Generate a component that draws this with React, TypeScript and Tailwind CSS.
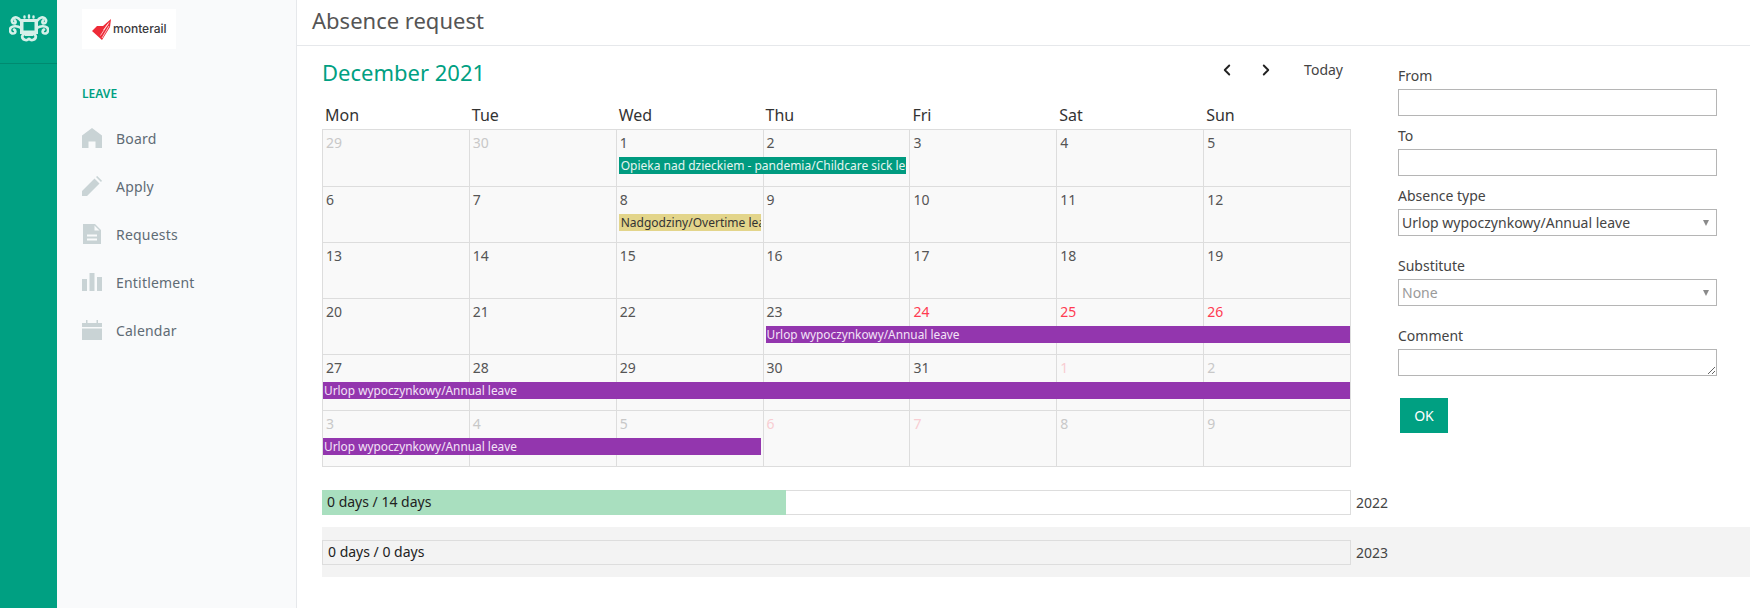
import { ChevronLeft, ChevronRight } from "lucide-react";

const FONT = "font-['Noto_Sans','Open_Sans',sans-serif]";

type Day = { n: number; tone?: "out" | "red" | "pink" };
type Leave = { label: string; place: string; color: string };
type Week = { days: Day[]; rowClass: string; leave?: Leave };

const d = (n: number): Day => ({ n });
const out = (n: number): Day => ({ n, tone: "out" });
const red = (n: number): Day => ({ n, tone: "red" });
const pink = (n: number): Day => ({ n, tone: "pink" });

const ANNUAL = "Urlop wypoczynkowy/Annual leave";

const WEEKS: Week[] = [
  {
    rowClass: "h-[57px]",
    days: [out(29), out(30), d(1), d(2), d(3), d(4), d(5)],
    leave: {
      label: "Opieka nad dzieckiem - pandemia/Childcare sick leave",
      place: "col-start-3 col-span-2 ml-[3px] mr-[3px] pl-[2px] text-[12px]",
      color: "bg-[#009b80] text-[#e6f5f1]",
    },
  },
  {
    rowClass: "h-[56px]",
    days: [d(6), d(7), d(8), d(9), d(10), d(11), d(12)],
    leave: {
      label: "Nadgodziny/Overtime leave",
      place: "col-start-3 col-span-1 ml-[3px] mr-[2px] pl-[2px] text-[12px]",
      color: "bg-[#e3d58b] text-[#333333]",
    },
  },
  { rowClass: "h-[56px]", days: [d(13), d(14), d(15), d(16), d(17), d(18), d(19)] },
  {
    rowClass: "h-[56px]",
    days: [d(20), d(21), d(22), d(23), red(24), red(25), red(26)],
    leave: {
      label: ANNUAL,
      place: "col-start-4 col-span-4 ml-[3px] pl-[1px] text-[11.85px]",
      color: "bg-[#9336ae] text-[#f3e3f7]",
    },
  },
  {
    rowClass: "h-[56px]",
    days: [d(27), d(28), d(29), d(30), d(31), pink(1), out(2)],
    leave: {
      label: ANNUAL,
      place: "col-start-1 col-span-7 ml-[1px] pl-[1px] text-[11.85px]",
      color: "bg-[#9336ae] text-[#f3e3f7]",
    },
  },
  {
    rowClass: "h-[56px]",
    days: [out(3), out(4), out(5), pink(6), pink(7), out(8), out(9)],
    leave: {
      label: ANNUAL,
      place: "col-start-1 col-span-3 ml-[1px] mr-[2px] pl-[1px] text-[11.85px]",
      color: "bg-[#9336ae] text-[#f3e3f7]",
    },
  },
];

const toneClass = {
  out: "text-[#c8c8c8]",
  red: "text-[#ff3b52]",
  pink: "text-[#f8cdd2]",
};

function RailLogo() {
  return (
    <svg width="40" height="28" viewBox="0 0 40 28" fill="none" stroke="#d5f0e9" strokeLinecap="round">
      <path
        fillRule="evenodd"
        stroke="none"
        fill="#d5f0e9"
        d="M11 5h18v15h-5v2h-8v-2h-5zM14.500 8v8.500h11V8z"
      />
      <path d="M12 7C9 3 6 2.500 4 4.500s-1 5 1 5 2-2 1-3" strokeWidth="2.600" />
      <path d="M28 7c3-4 6-4.500 8-2.500s1 5-1 5-2-2-1-3" strokeWidth="2.600" />
      <path d="M12 14c-3-2-8-2.500-10-.5s-1 6 2 6 3-3 1-4" strokeWidth="2.600" />
      <path d="M28 14c3-2 8-2.500 10-.5s1 6-2 6-3-3-1-4" strokeWidth="2.600" />
      <path d="M15.500 3.500V2.500M20 3.500V1.500M24.500 3.500V2.500" strokeWidth="2.400" />
      <path d="M16 20c-2 .5-3.500 2-2.500 4s4.500 3 6 1M24 20c2 .5 3.500 2 2.500 4s-4.500 3-6 1" strokeWidth="2.800" />
    </svg>
  );
}

function HomeIcon() {
  return (
    <svg width="20" height="20" viewBox="0 0 20 20" fill="#c9d3d5">
      <path d="M10 0l10 7.500V20h-6.500v-6.500h-7V20H0V7.500z" />
    </svg>
  );
}

function PencilIcon() {
  return (
    <svg width="20" height="20" viewBox="0 0 20 20" fill="#c9d3d5">
      <path d="M0 20v-5L12.500 2.500l5 5L5 20zM14 1l1.200-1L20 4.800 19 6z" />
    </svg>
  );
}

function DocIcon() {
  return (
    <svg width="20" height="20" viewBox="0 0 20 20" fill="#c9d3d5">
      <path
        fillRule="evenodd"
        d="M1 0h12l6 6v14H1zM12.500 1.500V6.500h5zM5 10.500v2h10v-2zM5 14.500v2h10v-2z"
      />
    </svg>
  );
}

function BarsIcon() {
  return (
    <svg width="20" height="20" viewBox="0 0 20 20" fill="#c9d3d5">
      <path d="M0 7h5v12H0zM7.500 1h5v18h-5zM15 5h5v14h-5z" />
    </svg>
  );
}

function CalendarIcon() {
  return (
    <svg width="20" height="20" viewBox="0 0 20 20" fill="#c9d3d5">
      <path d="M0 3h4V0h1.500v3h9V0H16v3h4v4H0zM0 8.500h20V20H0z" />
    </svg>
  );
}

const NAV = [
  { label: "Board", icon: <HomeIcon /> },
  { label: "Apply", icon: <PencilIcon /> },
  { label: "Requests", icon: <DocIcon /> },
  { label: "Entitlement", icon: <BarsIcon /> },
  { label: "Calendar", icon: <CalendarIcon /> },
];

function MonterailLogo() {
  return (
    <div className="flex h-[40px] w-[94px] items-center bg-white pl-[10px]">
      <svg width="19" height="21" viewBox="0 0 19 21" className="shrink-0">
        <path d="M0 12l5-5h6l8-7-1 8-8 13z" fill="#ee2b38" />
        <path d="M10 19l7-12M8.500 16.500L17 3.500M11.500 11L16 5" stroke="#fff" strokeWidth="0.700" />
      </svg>
      <span className="ml-[2px] font-['Inter',sans-serif] text-[12px] font-medium leading-none text-[#3a3a3e]">
        monterail
      </span>
    </div>
  );
}

function Sidebar() {
  return (
    <aside className="flex w-[240px] shrink-0 flex-col border-r border-[#e6e8eb] bg-[#f9fafb] pl-[25px]">
      <div className="pt-[9px]">
        <MonterailLogo />
      </div>
      <div className="mt-[36px] text-[12px] font-semibold leading-[18px] text-[#00a082]">LEAVE</div>
      <nav className="mt-[11px] flex flex-col">
        {NAV.map((item) => (
          <a
            key={item.label}
            className="flex h-[48px] items-center gap-[14px] text-[14px] tracking-[0.2px] text-[#5f6b75]"
          >
            {item.icon}
            {item.label}
          </a>
        ))}
      </nav>
    </aside>
  );
}

function Calendar() {
  return (
    <div className="w-[1029px] shrink-0">
      <div className="flex h-[54px] items-center justify-between">
        <h2 className="mb-[2px] text-[22px] leading-none text-[#00a082]">December 2021</h2>
        <div className="mb-[6px] flex items-center text-[#222222]">
          <ChevronLeft size={18} strokeWidth={2.5} />
          <ChevronRight size={18} strokeWidth={2.5} className="ml-[21px]" />
          <span className="mb-[2px] ml-[29px] mr-[8px] text-[14px] text-[#444444]">Today</span>
        </div>
      </div>
      <div className="grid h-[29px] grid-cols-7 items-center pr-px">
        {["Mon", "Tue", "Wed", "Thu", "Fri", "Sat", "Sun"].map((name) => (
          <div key={name} className="pl-[3px] text-[16px] text-[#333333]">
            {name}
          </div>
        ))}
      </div>
      <div className="border-b border-r border-[#dddddd]">
        {WEEKS.map((week, i) => (
          <div key={i} className={`grid grid-cols-7 ${week.rowClass}`}>
            {week.days.map((day, j) => (
              <div
                key={j}
                style={{ gridColumnStart: j + 1 }}
                className={`row-start-1 border-l border-t border-[#dddddd] bg-[#f9f9f9] pl-[3px] pt-[3px] text-[14px] leading-[20px] ${
                  day.tone ? toneClass[day.tone] : "text-[#555555]"
                }`}
              >
                {day.n}
              </div>
            ))}
            {week.leave && (
              <div
                className={`z-10 row-start-1 mt-[28px] h-[17px] self-start overflow-hidden whitespace-nowrap leading-[17px] ${week.leave.place} ${week.leave.color}`}
              >
                {week.leave.label}
              </div>
            )}
          </div>
        ))}
      </div>
    </div>
  );
}

function FieldLabel({ children }: { children: string }) {
  return <label className="block text-[14px] leading-[20px] text-[#444444]">{children}</label>;
}

const fieldClass = "block h-[27px] w-[319px] border border-[#b5b5b5] bg-white text-[14px] outline-none";

function SelectField({ value, muted }: { value: string; muted?: boolean }) {
  return (
    <div className="relative w-[319px]">
      <select
        defaultValue={value}
        className={`${fieldClass} appearance-none pl-[3px] ${muted ? "text-[#9a9a9a]" : "text-[#444444]"}`}
      >
        <option>{value}</option>
      </select>
      <span className="absolute right-[8px] top-[11px] h-0 w-0 border-x-[3px] border-t-[6px] border-x-transparent border-t-[#8a8a8a]" />
    </div>
  );
}

function RequestForm() {
  return (
    <form className="ml-[47px] w-[319px] pt-[20px]">
      <FieldLabel>From</FieldLabel>
      <input className={`${fieldClass} mt-[3px]`} />
      <div className="mt-[10px]">
        <FieldLabel>To</FieldLabel>
      </div>
      <input className={`${fieldClass} mt-[3px]`} />
      <div className="mt-[10px]">
        <FieldLabel>Absence type</FieldLabel>
      </div>
      <div className="mt-[3px]">
        <SelectField value="Urlop wypoczynkowy/Annual leave" />
      </div>
      <div className="mt-[20px]">
        <FieldLabel>Substitute</FieldLabel>
      </div>
      <div className="mt-[3px]">
        <SelectField value="None" muted />
      </div>
      <div className="mt-[20px]">
        <FieldLabel>Comment</FieldLabel>
      </div>
      <textarea className={`${fieldClass} mt-[3px]`} />
      <button
        type="button"
        className="ml-[2px] mt-[22px] h-[35px] w-[48px] bg-[#00a082] text-[14px] text-white"
      >
        OK
      </button>
    </form>
  );
}

function YearBar({ text, year, fill }: { text: string; year: string; fill?: boolean }) {
  return (
    <div className="flex items-center">
      <div className="relative h-[25px] w-[1029px] shrink-0 border border-[#dddddd]">
        {fill && <div className="absolute -inset-y-px -left-px w-[464px] bg-[#a9dfbf]" />}
        <span
          className={`relative -top-px block text-[14px] leading-[23px] text-[#222222] ${fill ? "pl-[4px]" : "pl-[5px]"}`}
        >
          {text}
        </span>
      </div>
      <span className="ml-[5px] text-[14px] text-[#444444]">{year}</span>
    </div>
  );
}

export default function App() {
  return (
    <div className={`flex h-[608px] w-[1750px] overflow-hidden bg-white ${FONT}`}>
      <div className="w-[57px] shrink-0 bg-[#00a082]">
        <div className="flex h-[64px] items-start justify-center border-b border-[#008a70] pt-[14px]">
          <RailLogo />
        </div>
      </div>
      <Sidebar />
      <main className="min-w-0 flex-1">
        <header className="flex h-[46px] items-center border-b border-[#e6e8eb] pl-[15px]">
          <h1 className="mb-[5px] text-[22px] leading-none text-[#555555]">Absence request</h1>
        </header>
        <div className="pl-[25px]">
          <div className="flex">
            <Calendar />
            <RequestForm />
          </div>
          <div className="mt-[23px]">
            <YearBar text="0 days / 14 days" year="2022" fill />
          </div>
          <div className="mt-[12px] bg-[#f3f3f3] pb-[12px] pt-[13px]">
            <YearBar text="0 days / 0 days" year="2023" />
          </div>
        </div>
      </main>
    </div>
  );
}
